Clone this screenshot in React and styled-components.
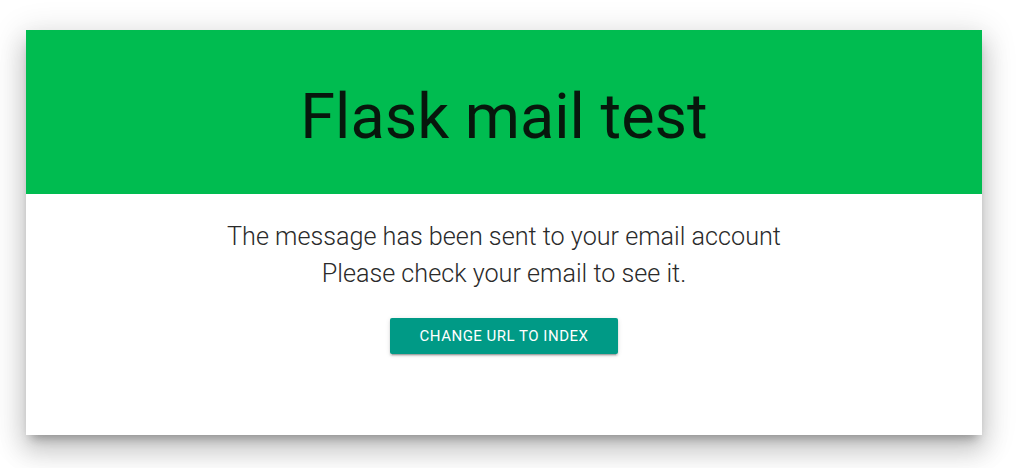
import React from "react";
import styled, { createGlobalStyle } from "styled-components";

const GlobalStyle = createGlobalStyle`
  html, body {
    margin: 0;
    padding: 0;
    background: #ffffff;
    font-family: Roboto, "Liberation Sans", sans-serif;
    color: rgba(0, 0, 0, 0.87);
  }
`;

const Page = styled.div`
  padding: 30px 42px 33px 26px;
`;

const Card = styled.div`
  width: 956px;
  height: 405px;
  background: #ffffff;
  display: flex;
  flex-direction: column;
  box-shadow: 0 16px 24px 2px rgba(0, 0, 0, 0.14),
    0 6px 30px 5px rgba(0, 0, 0, 0.12), 0 8px 10px -5px rgba(0, 0, 0, 0.3);
`;

const Header = styled.div`
  height: 164px;
  background: #00bc50;
  display: flex;
  align-items: center;
  justify-content: center;
`;

const Title = styled.h1`
  margin: 8px 0 0 0;
  font-size: 63px;
  font-weight: 400;
  line-height: 1;
  color: #07170c;
`;

const Body = styled.div`
  display: flex;
  flex-direction: column;
  align-items: center;
  padding-top: 24px;
`;

const Message = styled.p`
  margin: 0;
  font-size: 25.2px;
  font-weight: 300;
  line-height: 37px;
  text-align: center;
  color: #2a2a2a;
`;

const Button = styled.button`
  margin-top: 26px;
  height: 36px;
  padding: 0 30px;
  border: none;
  border-radius: 2px;
  background: #009a86;
  color: #ffffff;
  font-family: Roboto, "Liberation Sans", sans-serif;
  font-size: 15px;
  letter-spacing: 0.5px;
  text-transform: uppercase;
  cursor: pointer;
  box-shadow: 0 2px 2px 0 rgba(0, 0, 0, 0.14), 0 1px 5px 0 rgba(0, 0, 0, 0.12),
    0 3px 1px -2px rgba(0, 0, 0, 0.2);
`;

export default function App() {
  return (
    <>
      <GlobalStyle />
      <Page>
        <Card>
          <Header>
            <Title>Flask mail test</Title>
          </Header>
          <Body>
            <Message>
              The message has been sent to your email account
              <br />
              Please check your email to see it.
            </Message>
            <Button>Change URL to index</Button>
          </Body>
        </Card>
      </Page>
    </>
  );
}
